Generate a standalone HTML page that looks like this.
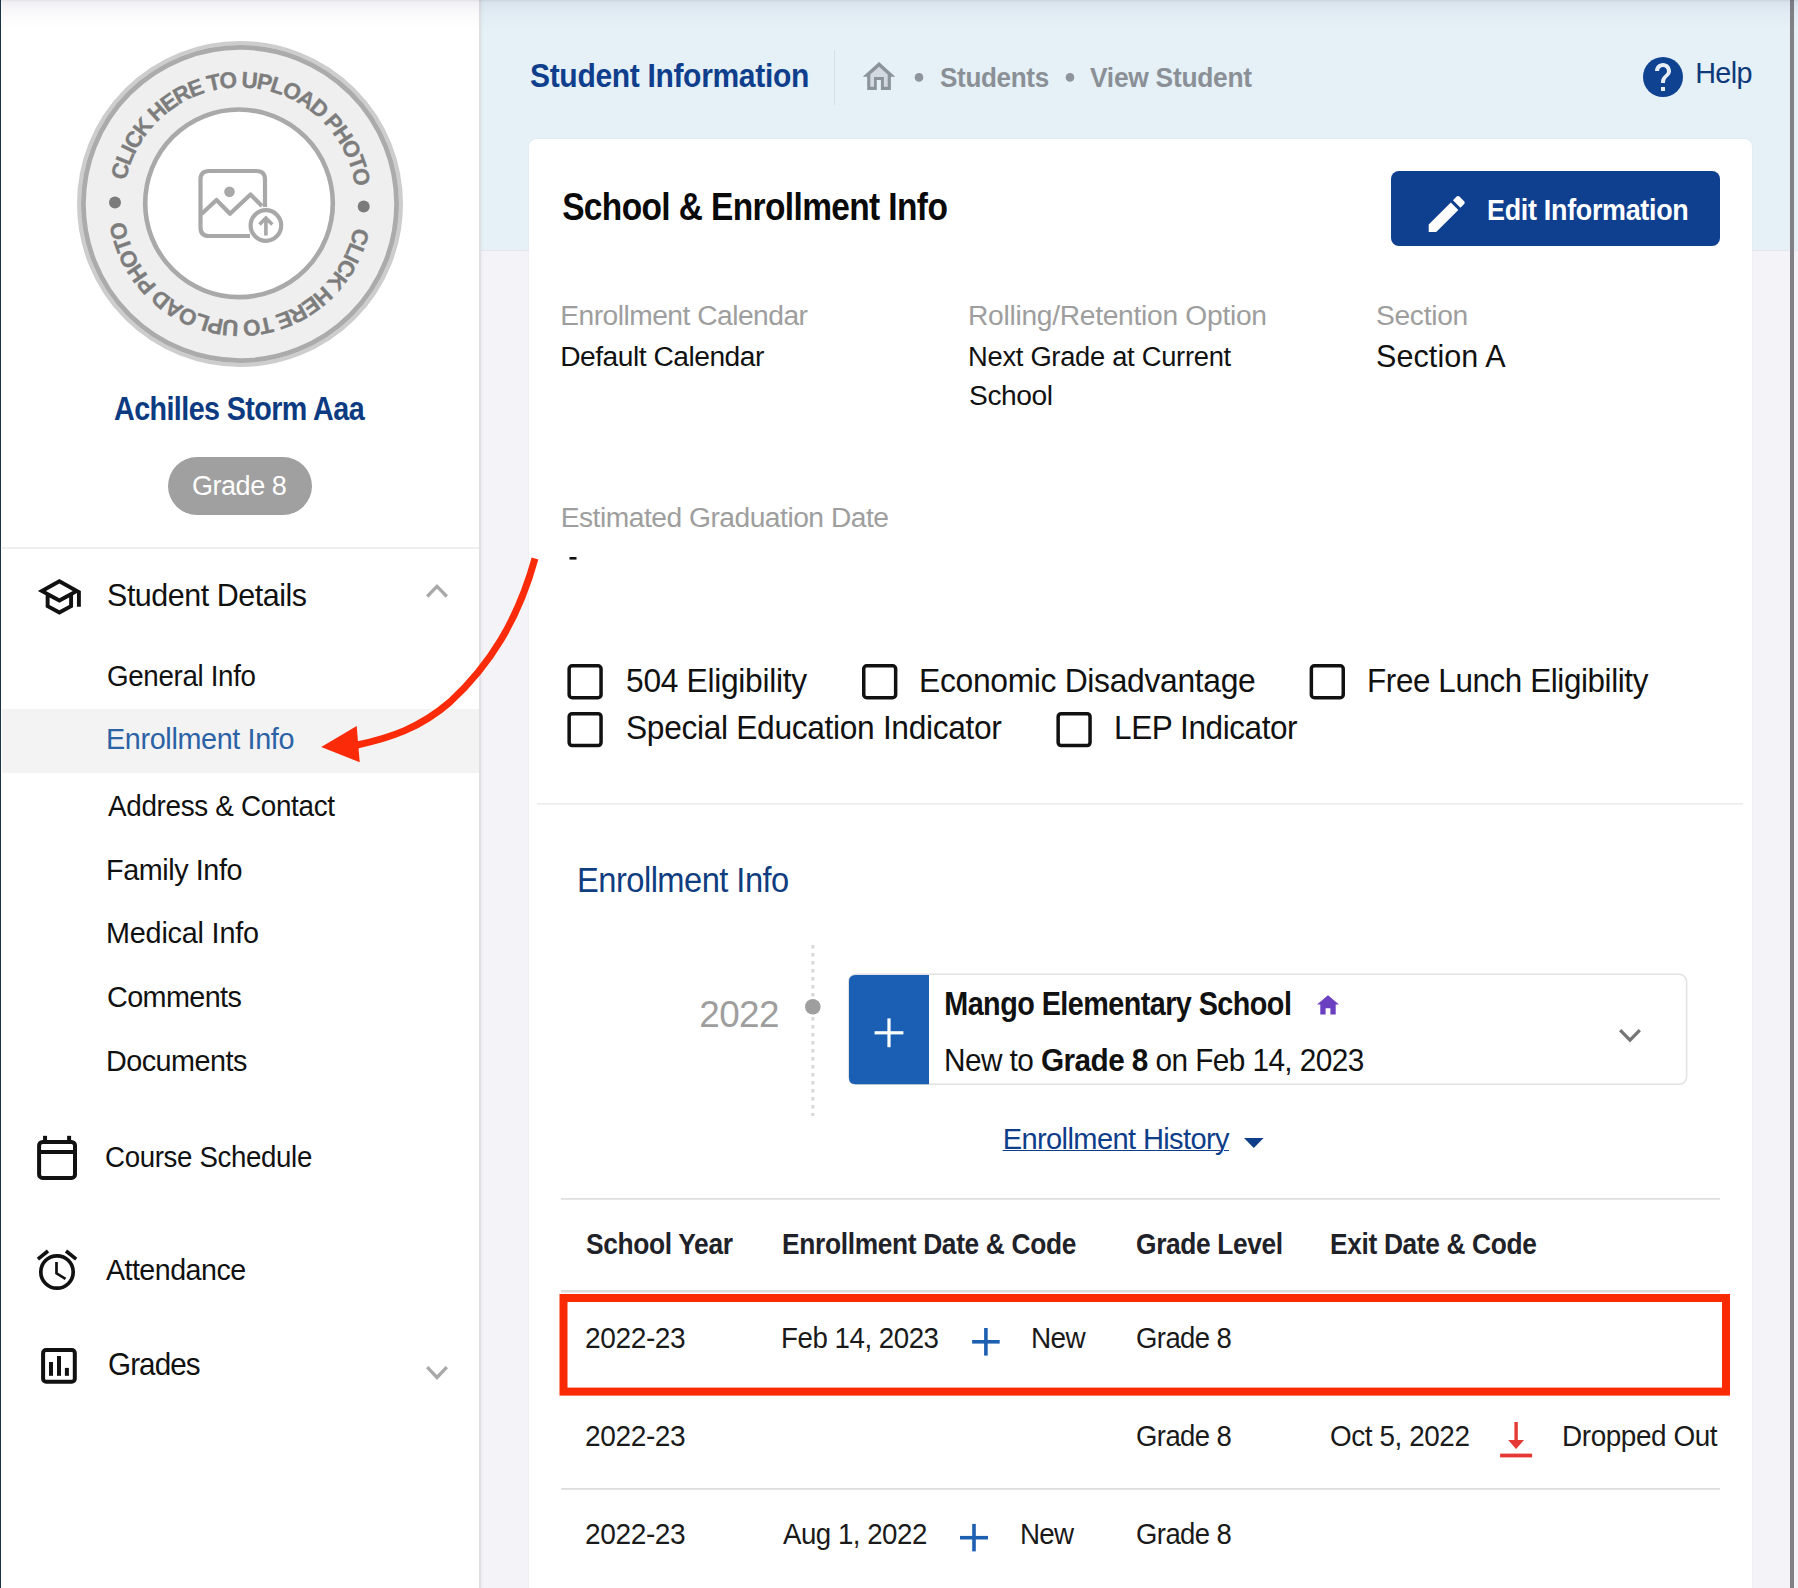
<!DOCTYPE html>
<html><head><meta charset="utf-8">
<style>
html,body{margin:0;padding:0;}
body{width:1798px;height:1588px;overflow:hidden;position:relative;background:#f4f4f8;font-family:"Liberation Sans",sans-serif;}
.abs{position:absolute;}
.t{position:absolute;white-space:nowrap;line-height:1;font-family:"Liberation Sans",sans-serif;}
.t b{font-weight:700;}
</style></head><body>
<!-- header band -->
<div class="abs" style="left:480px;top:0;width:1318px;height:250px;background:#e5f0f7;"></div>
<div class="abs" style="left:480px;top:250px;width:1318px;height:1px;background:#e4e7ed;"></div>
<!-- sidebar -->
<div class="abs" style="left:0;top:0;width:479px;height:1588px;background:#ffffff;"></div>
<div class="abs" style="left:479px;top:0;width:2px;height:1588px;background:#dfdfe4;"></div>
<div class="abs" style="left:481px;top:0;width:3px;height:1588px;background:linear-gradient(to right,rgba(0,0,0,0.03),rgba(0,0,0,0));"></div>
<div class="abs" style="left:0;top:0;width:1.3px;height:1588px;background:#1b3349;"></div>
<!-- scrollbar -->
<div class="abs" style="left:1790px;top:0;width:4px;height:1588px;background:#808086;"></div>
<!-- top shadow -->
<div class="abs" style="left:1px;top:0;width:1797px;height:30px;background:linear-gradient(to bottom,rgba(40,40,80,0.14) 0px,rgba(40,40,80,0.07) 2px,rgba(40,40,80,0.04) 8px,rgba(40,40,80,0.015) 18px,rgba(40,40,80,0) 30px);"></div>

<!-- card -->
<div class="abs" style="left:529px;top:139px;width:1223px;height:1460px;background:#ffffff;border-radius:8px;box-shadow:0 0 3px rgba(0,0,0,0.04);"></div>


<svg class="abs" style="left:0;top:0" width="480" height="400" viewBox="0 0 480 400">
  <defs>
    <path id="arc1" d="M125.84,180.77 A116.5,116.5 0 0 1 355.22,186.78"/>
    <path id="arc2" d="M354.16,227.23 A116.5,116.5 0 0 1 124.78,221.22"/>
  </defs>
  <circle cx="240" cy="204" r="161" fill="#efefef" stroke="#cdcdcd" stroke-width="4"/>
  <circle cx="240" cy="204" r="156.6" fill="none" stroke="#ababab" stroke-width="4.8"/>
  <circle cx="239" cy="203.3" r="93.8" fill="#ffffff" stroke="#a9a9a9" stroke-width="4.6"/>
  <g fill="#7d7d7d" stroke="#7d7d7d" stroke-width="0.35" font-family="Liberation Sans" font-weight="700" font-size="22.5">
    <text><textPath href="#arc1" textLength="325.3" lengthAdjust="spacing">CLICK HERE TO UPLOAD PHOTO</textPath></text>
    <text><textPath href="#arc2" textLength="325.3" lengthAdjust="spacing">CLICK HERE TO UPLOAD PHOTO</textPath></text>
  </g>
  <circle cx="115" cy="202.5" r="6" fill="#7b7b7b"/>
  <circle cx="363.7" cy="206.5" r="6" fill="#7b7b7b"/>
  <!-- image icon -->
  <g fill="none" stroke="#a8a8a8" stroke-width="4.2" stroke-linejoin="round">
    <path d="M250,236 H209 Q200.5,236 200.5,227.5 V179.5 Q200.5,171 209,171 H256.5 Q265,171 265,179.5 V207"/>
    <polyline points="201.5,214 216.5,200 230,213.8 250.5,194.5 262,206"/>
  </g>
  <circle cx="229.5" cy="191.7" r="5.3" fill="#a8a8a8"/>
  <circle cx="265.9" cy="225.5" r="15.3" fill="#ffffff" stroke="#a8a8a8" stroke-width="4.2"/>
  <path d="M265.9,235.5 V218.5 M259.5,224.5 L265.9,218 L272.3,224.5" fill="none" stroke="#a8a8a8" stroke-width="3.6"/>
</svg>

<!-- pill -->
<div class="abs" style="left:168px;top:457px;width:144px;height:58px;border-radius:29px;background:#a0a0a0;"></div>
<!-- sidebar separator & highlight -->
<div class="abs" style="left:2px;top:547px;width:477px;height:2px;background:#efefef;"></div>
<div class="abs" style="left:2px;top:709px;width:477px;height:63.5px;background:#f3f3f3;"></div>

<!-- sidebar icons -->
<svg class="abs" style="left:0;top:0" width="480" height="1588" viewBox="0 0 480 1588">
  <g transform="translate(35.9,573) scale(1.955,1.99)" fill="#111">
    <path d="M12 21l-7-3.8v-6L1 9l11-6 11 6v8h-2v-6.9l-2 1.1v6L12 21zm0-8.3L18.85 9 12 5.3 5.15 9 12 12.7zm0 6.025l5-2.7V12.25L12 15l-5-2.75v3.775l5 2.7z"/>
  </g>
  <!-- calendar -->
  <g fill="none" stroke="#111" stroke-width="4">
    <rect x="39.1" y="1142" width="35.9" height="35.9" rx="3.5"/>
    <line x1="39.1" y1="1152.1" x2="75" y2="1152.1"/>
    <line x1="45.05" y1="1135.8" x2="45.05" y2="1142"/>
    <line x1="69.1" y1="1135.8" x2="69.1" y2="1142"/>
  </g>
  <!-- alarm -->
  <g fill="none" stroke="#111">
    <circle cx="57" cy="1272" r="16.2" stroke-width="3.7"/>
    <polyline points="56.5,1262 56.5,1273.3 65.5,1278.8" stroke-width="2.7"/>
    <line x1="37.9" y1="1259.2" x2="48" y2="1251" stroke-width="3.6"/>
    <line x1="66" y1="1251" x2="76.2" y2="1259.2" stroke-width="3.6"/>
  </g>
  <!-- grades -->
  <g fill="none" stroke="#111" stroke-width="4">
    <rect x="43.1" y="1350.1" width="31.7" height="31.7" rx="3"/>
  </g>
  <g fill="#111">
    <rect x="49" y="1362" width="4" height="13.8"/>
    <rect x="57" y="1356" width="4" height="19.8"/>
    <rect x="64.9" y="1367.9" width="4" height="7.9"/>
  </g>
  <!-- chevrons -->
  <polyline points="427.2,596.5 437,586.3 446.8,596.5" fill="none" stroke="#a9a9a9" stroke-width="3.3"/>
  <polyline points="427.2,1367.2 437,1377.5 446.8,1367.2" fill="none" stroke="#a9a9a9" stroke-width="3.3"/>
</svg>

<!-- header items -->
<div class="abs" style="left:833.5px;top:50px;width:1px;height:55px;background:#d6dee6;"></div>
<svg class="abs" style="left:0;top:0" width="1798" height="260" viewBox="0 0 1798 260">
  <path d="M879.1,62.1 L862.7,76.7 H867.2 V89.9 H876.8 V80 H880.9 V89.9 H890.9 V76.7 H895.2 Z" fill="#8b939b"/>
  <path d="M879.1,66.8 L870.3,74.6 V86.7 H874 V77.1 H883.9 V86.7 H887.7 V74.6 Z" fill="#d3d9e0"/>
  <circle cx="919" cy="77.4" r="4.3" fill="#8e959c"/>
  <circle cx="1070" cy="77.4" r="4.3" fill="#8e959c"/>
  <circle cx="1663" cy="77" r="20" fill="#0f4291"/>
  <g transform="translate(1639,53) scale(2)" fill="#e8eef6">
    <path d="M13 19h-2v-2h2v2zm2.07-7.75l-.9.92C13.45 12.9 13 13.5 13 15h-2v-.5c0-1.1.45-2.1 1.17-2.83l1.24-1.26c.37-.36.59-.86.59-1.41 0-1.1-.9-2-2-2s-2 .9-2 2H8c0-2.21 1.790-4 4-4s4 1.79 4 4c0 .88-.36 1.68-.93 2.25z"/>
  </g>
  <!-- edit button -->
  <rect x="1391" y="171" width="329" height="75" rx="8" fill="#0f3f8f"/>
  <g transform="translate(1422.7,190) scale(2)" fill="#ffffff">
    <path d="M3 17.25V21h3.75L17.81 9.94l-3.75-3.75L3 17.25zM20.71 7.04c.39-.39.39-1.02 0-1.41l-2.34-2.34c-.39-.39-1.020-.39-1.41 0l-1.83 1.83 3.75 3.75 1.830-1.830z"/>
  </g>
</svg>

<!-- card body shapes -->
<svg class="abs" style="left:0;top:0" width="1798" height="1588" viewBox="0 0 1798 1588">
  <rect x="569.5" y="557" width="7" height="2.6" fill="#111"/>
  <g fill="none" stroke="#111" stroke-width="3.5">
    <rect x="569.15" y="665.85" width="31.9" height="31.9" rx="3"/>
    <rect x="863.75" y="665.85" width="31.9" height="31.9" rx="3"/>
    <rect x="1311.35" y="665.85" width="31.9" height="31.9" rx="3"/>
    <rect x="569.15" y="713.65" width="31.9" height="31.9" rx="3"/>
    <rect x="1058.15" y="713.65" width="31.9" height="31.9" rx="3"/>
  </g>
  <rect x="537" y="803" width="1206" height="1.5" fill="#ececec"/>
  <!-- timeline -->
  <line x1="812.8" y1="945" x2="812.8" y2="1116" stroke="#d7d7d7" stroke-width="3" stroke-dasharray="3.5 4.5"/>
  <circle cx="812.8" cy="1006.8" r="7.8" fill="#9e9e9e"/>
  <rect x="848.6" y="974.3" width="838" height="110" rx="7.5" fill="#fff" stroke="#e2e2e2" stroke-width="1.5"/>
  <path d="M849,981.5 Q849,975 855.5,975 H929 V1084.2 H855.5 Q849,1084.2 849,1077.7 Z" fill="#1b5fb4"/>
  <g stroke="#ffffff" stroke-width="3.2">
    <line x1="874.6" y1="1032.8" x2="903.4" y2="1032.8"/>
    <line x1="889" y1="1018.4" x2="889" y2="1047.2"/>
  </g>
  <path d="M1328,995.3 L1317,1004.6 H1320.3 V1014.4 H1325.6 V1008.2 H1330.4 V1014.4 H1335.7 V1004.6 H1339 Z" fill="#6b3fc1"/>
  <polyline points="1620.2,1030.2 1630,1040.2 1639.8,1030.2" fill="none" stroke="#757575" stroke-width="3.2"/>
  <path d="M1244,1138 H1263.6 L1253.8,1148 Z" fill="#0e3e8a"/>
  <rect x="561" y="1198" width="1159" height="1.8" fill="#e0e0e0"/>
  <rect x="561" y="1290" width="1159" height="2.5" fill="#dcdcdc"/>
  <rect x="561" y="1488" width="1159" height="1.8" fill="#dedede"/>
  <!-- plus icons -->
  <g stroke="#1d5fb0" stroke-width="3.6">
    <line x1="972.1" y1="1341.8" x2="999.7" y2="1341.8"/>
    <line x1="985.9" y1="1328" x2="985.9" y2="1355.6"/>
    <line x1="960" y1="1537.7" x2="988" y2="1537.7"/>
    <line x1="974" y1="1523.9" x2="974" y2="1551.4"/>
  </g>
  <!-- red drop arrow -->
  <g fill="#e53935">
    <rect x="1514.4" y="1422" width="3.4" height="22"/>
    <path d="M1508.2,1440 H1524 L1516.1,1449 Z"/>
    <rect x="1500.1" y="1453.6" width="32" height="3.8"/>
  </g>
  <!-- red highlight rect -->
  <rect x="563.5" y="1298" width="1162.5" height="93.6" fill="none" stroke="#fa2a05" stroke-width="8"/>
  <!-- annotation arrow -->
  <path d="M535,558.5 C518,620 490,665 450,702 C420,728 390,738 357,745" fill="none" stroke="#fb2a08" stroke-width="7"/>
  <path d="M321.2,747.1 L356.7,726 L359.7,762.2 Z" fill="#fb2a08"/>
</svg>

<div class="t" style="left:114.1px;top:391.7px;font-size:33.43px;font-weight:700;color:#0d3b82;letter-spacing:-0.672px;transform:scaleX(0.8583);transform-origin:-0.0px 0;">Achilles Storm Aaa</div>
<div class="t" style="left:192.4px;top:471.21px;font-size:28.34px;font-weight:400;color:#ffffff;letter-spacing:-0.519px;transform:scaleX(0.9539);transform-origin:1px 0;">Grade 8</div>
<div class="t" style="left:107px;top:578.73px;font-size:31.98px;font-weight:400;color:#111111;letter-spacing:-0.492px;transform:scaleX(0.9523);transform-origin:1px 0;">Student Details</div>
<div class="t" style="left:107px;top:662.14px;font-size:28.78px;font-weight:400;color:#111111;letter-spacing:-0.345px;transform:scaleX(0.9638);transform-origin:1px 0;">General Info</div>
<div class="t" style="left:106px;top:725.34px;font-size:28.78px;font-weight:400;color:#2b62a6;letter-spacing:-0.355px;">Enrollment Info</div>
<div class="t" style="left:108.0px;top:791.64px;font-size:28.78px;font-weight:400;color:#111111;letter-spacing:-0.326px;transform:scaleX(0.9675);transform-origin:-0.0px 0;">Address &amp; Contact</div>
<div class="t" style="left:106px;top:855.64px;font-size:28.78px;font-weight:400;color:#111111;letter-spacing:-0.417px;">Family Info</div>
<div class="t" style="left:106px;top:918.94px;font-size:28.78px;font-weight:400;color:#111111;letter-spacing:-0.19px;">Medical Info</div>
<div class="t" style="left:107px;top:983.04px;font-size:28.78px;font-weight:400;color:#111111;letter-spacing:-0.598px;">Comments</div>
<div class="t" style="left:106px;top:1046.84px;font-size:28.78px;font-weight:400;color:#111111;letter-spacing:-0.513px;">Documents</div>
<div class="t" style="left:105.4px;top:1143.46px;font-size:28.63px;font-weight:400;color:#111111;letter-spacing:-0.357px;transform:scaleX(0.9658);transform-origin:1px 0;">Course Schedule</div>
<div class="t" style="left:105.9px;top:1255.56px;font-size:28.63px;font-weight:400;color:#111111;letter-spacing:-0.512px;">Attendance</div>
<div class="t" style="left:107.8px;top:1347.73px;font-size:31.98px;font-weight:400;color:#111111;letter-spacing:-1.017px;transform:scaleX(0.9267);transform-origin:1px 0;">Grades</div>
<div class="t" style="left:529.5px;top:59.69px;font-size:32.85px;font-weight:700;color:#0f3f8c;letter-spacing:-0.377px;transform:scaleX(0.9155);transform-origin:-0.0px 0;">Student Information</div>
<div class="t" style="left:940.0px;top:62.51px;font-size:28.34px;font-weight:700;color:#8a9096;letter-spacing:-0.355px;transform:scaleX(0.9199);transform-origin:-0.0px 0;">Students</div>
<div class="t" style="left:1090.3px;top:62.51px;font-size:28.34px;font-weight:700;color:#8a9096;letter-spacing:-0.288px;transform:scaleX(0.9306);transform-origin:-0.0px 0;">View Student</div>
<div class="t" style="left:1695.2px;top:59.24px;font-size:28.78px;font-weight:400;color:#0e3a7a;letter-spacing:-0.621px;">Help</div>
<div class="t" style="left:561.5px;top:187.87px;font-size:38.66px;font-weight:700;color:#0a0a0a;letter-spacing:-0.708px;transform:scaleX(0.8659);transform-origin:1px 0;">School &amp; Enrollment Info</div>
<div class="t" style="left:1487px;top:194.72px;font-size:29.51px;font-weight:700;color:#ffffff;letter-spacing:-0.339px;transform:scaleX(0.9122);transform-origin:1px 0;">Edit Information</div>
<div class="t" style="left:560.2px;top:300.63px;font-size:28.2px;font-weight:400;color:#9e9e9e;letter-spacing:-0.509px;">Enrollment Calendar</div>
<div class="t" style="left:560.2px;top:341.73px;font-size:28.2px;font-weight:400;color:#111111;letter-spacing:-0.49px;">Default Calendar</div>
<div class="t" style="left:968px;top:301.13px;font-size:28.2px;font-weight:400;color:#9e9e9e;letter-spacing:-0.286px;">Rolling/Retention Option</div>
<div class="t" style="left:968px;top:342.13px;font-size:28.2px;font-weight:400;color:#111111;letter-spacing:-0.288px;transform:scaleX(0.9688);transform-origin:2px 0;">Next Grade at Current</div>
<div class="t" style="left:969px;top:381.13px;font-size:28.2px;font-weight:400;color:#111111;letter-spacing:-0.425px;">School</div>
<div class="t" style="left:1376px;top:301.13px;font-size:28.2px;font-weight:400;color:#9e9e9e;letter-spacing:-0.307px;">Section</div>
<div class="t" style="left:1376px;top:340.86px;font-size:30.52px;font-weight:400;color:#111111;letter-spacing:0.092px;">Section A</div>
<div class="t" style="left:560.7px;top:502.63px;font-size:28.2px;font-weight:400;color:#9e9e9e;letter-spacing:-0.488px;">Estimated Graduation Date</div>
<div class="t" style="left:625.8px;top:664.79px;font-size:32.85px;font-weight:400;color:#111111;letter-spacing:-0.305px;transform:scaleX(0.9667);transform-origin:1px 0;">504 Eligibility</div>
<div class="t" style="left:919.3px;top:664.79px;font-size:32.85px;font-weight:400;color:#111111;letter-spacing:-0.350px;transform:scaleX(0.9702);transform-origin:2px 0;">Economic Disadvantage</div>
<div class="t" style="left:1367px;top:664.79px;font-size:32.85px;font-weight:400;color:#111111;letter-spacing:-0.420px;transform:scaleX(0.9564);transform-origin:2px 0;">Free Lunch Eligibility</div>
<div class="t" style="left:625.5px;top:712.49px;font-size:32.85px;font-weight:400;color:#111111;letter-spacing:-0.343px;transform:scaleX(0.9665);transform-origin:1px 0;">Special Education Indicator</div>
<div class="t" style="left:1113.9px;top:712.49px;font-size:32.85px;font-weight:400;color:#111111;letter-spacing:-0.441px;transform:scaleX(0.9596);transform-origin:2px 0;">LEP Indicator</div>
<div class="t" style="left:576.7px;top:862.94px;font-size:34.45px;font-weight:400;color:#0f3d80;letter-spacing:-0.568px;transform:scaleX(0.9483);transform-origin:2px 0;">Enrollment Info</div>
<div class="t" style="left:699.2px;top:996.55px;font-size:36.92px;font-weight:400;color:#9e9e9e;letter-spacing:-0.559px;">2022</div>
<div class="t" style="left:944.2px;top:987.47px;font-size:32.99px;font-weight:700;color:#111111;letter-spacing:-0.624px;transform:scaleX(0.8720);transform-origin:2px 0;">Mango Elementary School</div>
<div class="t" style="left:944.2px;top:1045.2px;font-size:31.54px;font-weight:400;color:#111111;letter-spacing:-0.603px;transform:scaleX(0.9435);transform-origin:2px 0;">New to <b>Grade 8</b> on Feb 14, 2023</div>
<div class="t" style="left:1002.7px;top:1124.59px;font-size:29.07px;font-weight:400;color:#0e3e8a;letter-spacing:-0.615px;text-decoration:underline;text-underline-offset:1px;text-decoration-thickness:1.2px;">Enrollment History</div>
<div class="t" style="left:585.8px;top:1230.39px;font-size:29.07px;font-weight:700;color:#1f2228;letter-spacing:-0.396px;transform:scaleX(0.9079);transform-origin:-0.0px 0;">School Year</div>
<div class="t" style="left:781.5px;top:1230.39px;font-size:29.07px;font-weight:700;color:#1f2228;letter-spacing:-0.383px;transform:scaleX(0.9064);transform-origin:1px 0;">Enrollment Date &amp; Code</div>
<div class="t" style="left:1135.7px;top:1230.39px;font-size:29.07px;font-weight:700;color:#1f2228;letter-spacing:-0.404px;transform:scaleX(0.9052);transform-origin:1px 0;">Grade Level</div>
<div class="t" style="left:1330.3px;top:1230.39px;font-size:29.07px;font-weight:700;color:#1f2228;letter-spacing:-0.382px;transform:scaleX(0.9051);transform-origin:1px 0;">Exit Date &amp; Code</div>
<div class="t" style="left:585.1px;top:1324.19px;font-size:29.07px;font-weight:400;color:#1a1a1a;letter-spacing:-0.403px;transform:scaleX(0.9654);transform-origin:1px 0;">2022-23</div>
<div class="t" style="left:781.1px;top:1324.19px;font-size:29.07px;font-weight:400;color:#1a1a1a;letter-spacing:-0.493px;transform:scaleX(0.9520);transform-origin:2px 0;">Feb 14, 2023</div>
<div class="t" style="left:1031.3px;top:1324.19px;font-size:29.07px;font-weight:400;color:#1a1a1a;letter-spacing:-0.720px;transform:scaleX(0.9624);transform-origin:2px 0;">New</div>
<div class="t" style="left:1135.7px;top:1324.19px;font-size:29.07px;font-weight:400;color:#1a1a1a;letter-spacing:-0.631px;transform:scaleX(0.9453);transform-origin:1px 0;">Grade 8</div>
<div class="t" style="left:585.1px;top:1421.99px;font-size:29.07px;font-weight:400;color:#1a1a1a;letter-spacing:-0.403px;transform:scaleX(0.9654);transform-origin:1px 0;">2022-23</div>
<div class="t" style="left:1135.7px;top:1421.99px;font-size:29.07px;font-weight:400;color:#1a1a1a;letter-spacing:-0.631px;transform:scaleX(0.9453);transform-origin:1px 0;">Grade 8</div>
<div class="t" style="left:1330.3px;top:1421.99px;font-size:29.07px;font-weight:400;color:#1a1a1a;letter-spacing:-0.422px;transform:scaleX(0.9576);transform-origin:1px 0;">Oct 5, 2022</div>
<div class="t" style="left:1562.4px;top:1421.99px;font-size:29.07px;font-weight:400;color:#1a1a1a;letter-spacing:-0.443px;transform:scaleX(0.9599);transform-origin:2px 0;">Dropped Out</div>
<div class="t" style="left:585.1px;top:1519.59px;font-size:29.07px;font-weight:400;color:#1a1a1a;letter-spacing:-0.403px;transform:scaleX(0.9654);transform-origin:1px 0;">2022-23</div>
<div class="t" style="left:782.5px;top:1519.59px;font-size:29.07px;font-weight:400;color:#1a1a1a;letter-spacing:-0.509px;transform:scaleX(0.9513);transform-origin:-0.0px 0;">Aug 1, 2022</div>
<div class="t" style="left:1019.7px;top:1519.59px;font-size:29.07px;font-weight:400;color:#1a1a1a;letter-spacing:-0.866px;transform:scaleX(0.9549);transform-origin:2px 0;">New</div>
<div class="t" style="left:1135.7px;top:1519.59px;font-size:29.07px;font-weight:400;color:#1a1a1a;letter-spacing:-0.631px;transform:scaleX(0.9453);transform-origin:1px 0;">Grade 8</div>
</body></html>
